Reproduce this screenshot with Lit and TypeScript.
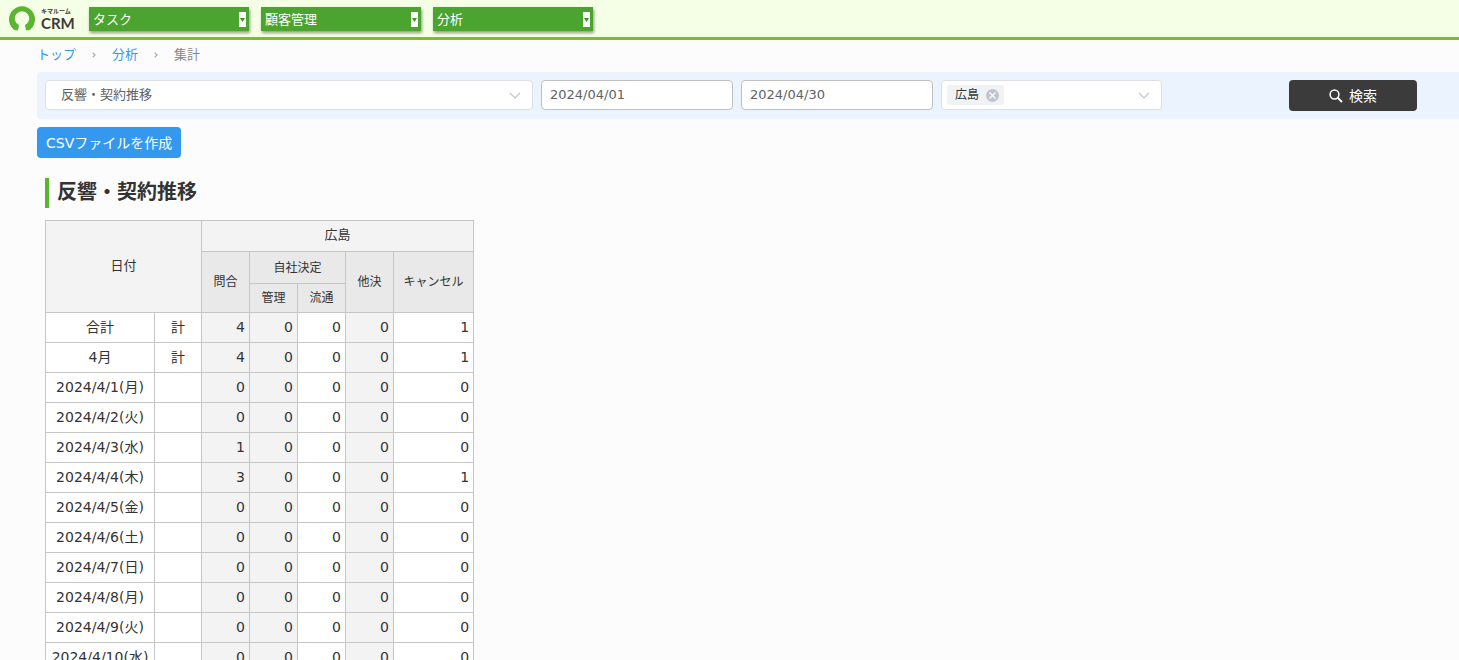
import { LitElement, html, css, svg } from "lit";
import { customElement } from "lit/decorators.js";
import { classMap } from "lit/directives/class-map.js";

interface Row {
  label: string;
  kind: string;
  values: number[];
}

const day = (label: string, values = [0, 0, 0, 0, 0]): Row => ({ label, kind: "", values });

const ROWS: Row[] = [
  { label: "合計", kind: "計", values: [4, 0, 0, 0, 1] },
  { label: "4月", kind: "計", values: [4, 0, 0, 0, 1] },
  day("2024/4/1(月)"),
  day("2024/4/2(火)"),
  day("2024/4/3(水)", [1, 0, 0, 0, 0]),
  day("2024/4/4(木)", [3, 0, 0, 0, 1]),
  day("2024/4/5(金)"),
  day("2024/4/6(土)"),
  day("2024/4/7(日)"),
  day("2024/4/8(月)"),
  day("2024/4/9(火)"),
  day("2024/4/10(水)"),
];

// Columns 問合, 管理 and 他決 are shaded.
const SHADED = [true, true, false, true, false];

const MENUS = ["タスク", "顧客管理", "分析"];

const chevron = svg`<path d="M1 1 L6 6 L11 1" fill="none" stroke="#c0c4cc" stroke-width="1.2"/>`;

@customElement("app-header")
export class AppHeader extends LitElement {
  static styles = css`
    :host {
      display: block;
    }
    .bar {
      display: flex;
      align-items: flex-start;
      height: 37px;
      padding-left: 8px;
      background: #f5ffe5;
      border-bottom: 3px solid #7dbd2a;
    }
    .logo {
      display: flex;
      width: 81px;
      padding-top: 5px;
      color: #3e3a39;
      text-decoration: none;
    }
    .mark {
      display: block;
      width: 28px;
      height: 26px;
    }
    .words {
      display: flex;
      flex-direction: column;
      padding: 2px 0 0 5px;
      font-weight: 700;
    }
    .kana {
      font-size: 6px;
      line-height: 7px;
      white-space: nowrap;
    }
    .crm {
      font-family: Lato, sans-serif;
      font-size: 15px;
      line-height: 18px;
    }
    .menus {
      display: flex;
      gap: 12px;
      padding-top: 7px;
    }
    .menu {
      display: grid;
      width: 160px;
      height: 24px;
      background: #4aa42f;
      box-shadow: 1px 2px 3px rgba(0, 0, 0, 0.4);
    }
    .menu > * {
      grid-area: 1 / 1;
    }
    .pick {
      appearance: none;
      width: 100%;
      border: 0;
      border-radius: 0;
      margin: 0;
      padding: 0 16px 0 4px;
      background: transparent;
      color: #fff;
      font: inherit;
      font-size: 13px;
    }
    .arrow {
      display: block;
      justify-self: end;
      align-self: center;
      width: 7px;
      height: 15px;
      margin-right: 3px;
      background: #fff;
      pointer-events: none;
    }
  `;

  render() {
    return html`<header class="bar">
      <a class="logo" href="#">
        <svg class="mark" viewBox="0 0 28 26" aria-hidden="true">
          <path
            d="M7 25.3 A13 13 0 1 1 21 25.3 L18 25.3 L17 20 A7.2 7.2 0 1 0 11 20 L10 25.3 Z"
            fill="#5ab531"
          />
        </svg>
        <span class="words">
          <span class="kana">キマルーム</span>
          <span class="crm">CRM</span>
        </span>
      </a>
      <nav class="menus">
        ${MENUS.map(
          (name) => html`<div class="menu">
            <select class="pick" aria-label=${name}>
              <option>${name}</option>
            </select>
            <svg class="arrow" viewBox="0 0 7 15" aria-hidden="true">
              <path d="M1 6 H6 L3.5 10 Z" fill="#3d9423" />
            </svg>
          </div>`,
        )}
      </nav>
    </header>`;
  }
}

@customElement("search-bar")
export class SearchBar extends LitElement {
  static styles = css`
    :host {
      display: block;
    }
    .form {
      display: grid;
      grid-template-columns:
        minmax(0, 488fr) minmax(0, 192fr) minmax(0, 192fr) minmax(0, 221fr)
        minmax(128px, 247fr);
      align-items: start;
      gap: 8px;
      padding: 8px 42px 8px 8px;
      border-radius: 4px 0 0 4px;
      background: #ebf3ff;
    }
    .wrap {
      display: grid;
      grid-template-columns: minmax(0, 1fr);
      align-items: center;
    }
    .wrap > * {
      grid-area: 1 / 1;
    }
    .field {
      box-sizing: border-box;
      appearance: none;
      width: 100%;
      height: 30px;
      margin: 0;
      padding: 0 8px 2px;
      border: 1px solid #c0c0c0;
      border-radius: 4px;
      background: #fff;
      color: #606266;
      font: inherit;
      font-size: 13px;
    }
    .soft {
      padding: 0 30px 2px 15px;
      border-color: #dcdfe6;
    }
    .chevron {
      display: block;
      justify-self: end;
      width: 12px;
      height: 7px;
      margin-right: 12px;
      pointer-events: none;
    }
    .multi {
      box-sizing: border-box;
      display: flex;
      align-items: center;
      height: 30px;
      padding-left: 5px;
      border: 1px solid #dcdfe6;
      border-radius: 4px;
      background: #fff;
    }
    .tag {
      display: flex;
      flex: none;
      align-items: center;
      gap: 7px;
      height: 20px;
      padding: 0 5px 0 8px;
      border-radius: 3px;
      background: #f0f2f5;
      color: #333;
      font-size: 12px;
      line-height: 18px;
    }
    .remove {
      display: block;
      width: 13px;
      height: 13px;
      padding: 0;
      border: 0;
      background: none;
    }
    .cross {
      display: block;
    }
    .query {
      flex: 1;
      min-width: 0;
      margin-right: 28px;
      border: 0;
      padding: 0;
      background: transparent;
      font: inherit;
      font-size: 13px;
    }
    .search {
      display: flex;
      align-items: center;
      justify-content: center;
      justify-self: end;
      gap: 6px;
      width: 128px;
      height: 31px;
      padding: 0 0 2px;
      border: 0;
      border-radius: 4px;
      background: #3b3b3b;
      color: #fff;
      font: inherit;
      font-size: 14px;
    }
    .glass {
      margin-top: 2px;
    }
  `;

  render() {
    return html`<form class="form" @submit=${(e: Event) => e.preventDefault()}>
      <div class="wrap">
        <select class="field soft" aria-label="集計">
          <option>反響・契約推移</option>
        </select>
        <svg class="chevron" viewBox="0 0 12 7" aria-hidden="true">${chevron}</svg>
      </div>
      <input class="field" type="text" aria-label="開始日" value="2024/04/01" />
      <input class="field" type="text" aria-label="終了日" value="2024/04/30" />
      <div class="wrap">
        <div class="multi">
          <span class="tag">
            広島
            <button class="remove" type="button" aria-label="削除">
              <svg class="cross" width="13" height="13" viewBox="0 0 13 13" aria-hidden="true">
                <circle cx="6.5" cy="6.5" r="6.5" fill="#c0c4cc" />
                <path d="M3.5 3.5 L9.5 9.5 M9.5 3.5 L3.5 9.5" stroke="#fff" stroke-width="1.3" />
              </svg>
            </button>
          </span>
          <input class="query" type="text" aria-label="店舗" />
        </div>
        <svg class="chevron" viewBox="0 0 12 7" aria-hidden="true">${chevron}</svg>
      </div>
      <button class="search" type="submit">
        <svg class="glass" width="14" height="14" viewBox="0 0 14 14" aria-hidden="true">
          <circle cx="5.5" cy="5.5" r="4.4" fill="none" stroke="#fff" stroke-width="1.5" />
          <path d="M8.6 8.6 L13 13" stroke="#fff" stroke-width="1.9" />
        </svg>
        検索
      </button>
    </form>`;
  }
}

@customElement("report-table")
export class ReportTable extends LitElement {
  static styles = css`
    :host {
      display: block;
    }
    .table {
      table-layout: fixed;
      width: 429px;
      border-collapse: collapse;
      background: #fff;
      color: #333;
      font-size: 14px;
      line-height: 20px;
    }
    .c-date {
      width: 109px;
    }
    .c-kind {
      width: 47px;
    }
    .c-num {
      width: 48px;
    }
    .c-last {
      width: 80px;
    }
    th,
    td {
      padding: 0 0 2px;
      border: 1px solid #c6c6c6;
      font-weight: 400;
      text-align: center;
      white-space: nowrap;
    }
    .top {
      background: #f3f3f3;
      font-size: 13px;
    }
    .sub {
      padding: 0;
      background: #e9e9e9;
      font-size: 12px;
    }
    .h1 {
      height: 28px;
    }
    .h2 {
      height: 31px;
    }
    .h3 {
      height: 28px;
    }
    .row {
      height: 30px;
    }
    .num {
      padding-right: 4px;
      text-align: right;
    }
    .shaded {
      background: #f3f3f3;
    }
  `;

  render() {
    return html`<table class="table">
      <colgroup>
        <col class="c-date" />
        <col class="c-kind" />
        <col class="c-num" />
        <col class="c-num" />
        <col class="c-num" />
        <col class="c-num" />
        <col class="c-last" />
      </colgroup>
      <thead>
        <tr>
          <th class="top" colspan="2" rowspan="3">日付</th>
          <th class="top h1" colspan="5">広島</th>
        </tr>
        <tr>
          <th class="sub" rowspan="2">問合</th>
          <th class="sub h2" colspan="2">自社決定</th>
          <th class="sub" rowspan="2">他決</th>
          <th class="sub" rowspan="2">キャンセル</th>
        </tr>
        <tr>
          <th class="sub h3">管理</th>
          <th class="sub h3">流通</th>
        </tr>
      </thead>
      <tbody>
        ${ROWS.map(
          (row) => html`<tr class="row">
            <th scope="row">${row.label}</th>
            <td>${row.kind}</td>
            ${row.values.map(
              (value, i) =>
                html`<td class=${classMap({ num: true, shaded: SHADED[i] })}>${value}</td>`,
            )}
          </tr>`,
        )}
      </tbody>
    </table>`;
  }
}

@customElement("app-root")
export class AppRoot extends LitElement {
  static styles = css`
    :host {
      display: block;
      height: 100vh;
      overflow: auto;
      scrollbar-width: none;
      background: #fcfcfc;
      color: #333;
      font-family: "DejaVu Sans", "Noto Sans CJK JP", sans-serif;
      font-size: 13px;
    }
    .page {
      padding-left: 37px;
    }
    .crumbs {
      display: flex;
      align-items: center;
      gap: 16px;
      height: 30px;
      padding-bottom: 2px;
      color: #888;
      line-height: 20px;
    }
    .link {
      color: #3498ee;
      text-decoration: none;
    }
    .csv {
      display: block;
      height: 31px;
      margin-top: 8px;
      padding: 0 9px 2px;
      border: 0;
      border-radius: 4px;
      background: #3498ee;
      color: #fff;
      font: inherit;
      font-size: 14px;
      white-space: nowrap;
    }
    .report {
      padding: 20px 8px 0;
    }
    .title {
      margin: 0 0 12px;
      padding: 0 0 2px 8px;
      border-left: 4px solid #5ab531;
      font-size: 20px;
      font-weight: 700;
      line-height: 28px;
    }
  `;

  render() {
    const separator = html`<svg width="4" height="6" viewBox="0 0 4 6" aria-hidden="true">
      <path d="M0.7 0.7 L3 3 L0.7 5.3" fill="none" stroke="#aaa" stroke-width="1.2" />
    </svg>`;
    return html`<app-header></app-header>
      <main class="page">
        <nav class="crumbs">
          <a class="link" href="#">トップ</a>
          ${separator}
          <a class="link" href="#">分析</a>
          ${separator}
          <span>集計</span>
        </nav>
        <search-bar></search-bar>
        <button class="csv" type="button">CSVファイルを作成</button>
        <section class="report">
          <h1 class="title">反響・契約推移</h1>
          <report-table></report-table>
        </section>
      </main>`;
  }
}
